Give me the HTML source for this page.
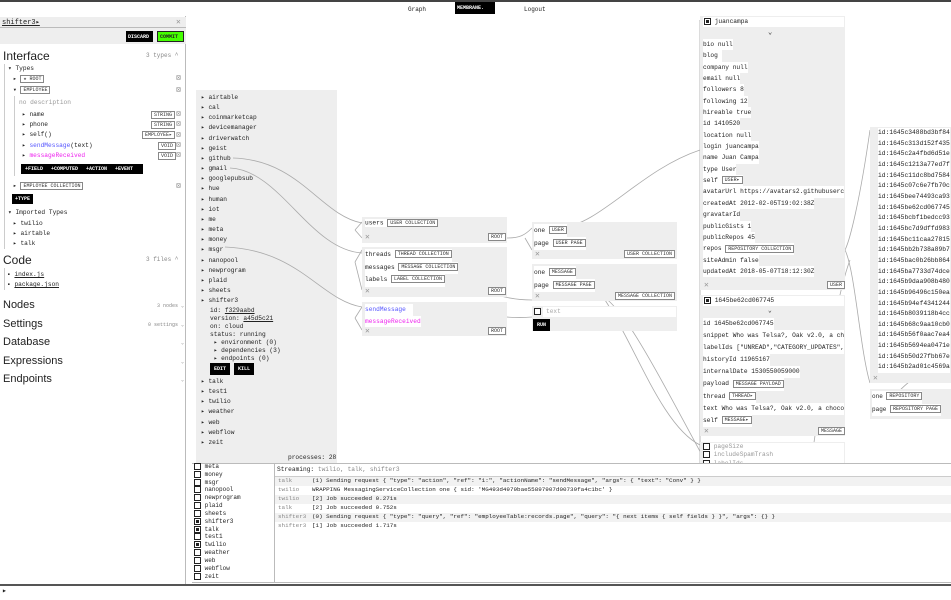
<!DOCTYPE html>
<html><head><meta charset="utf-8"><style>
*{margin:0;padding:0;box-sizing:border-box}
body{width:951px;height:600px;overflow:hidden;background:#fff;font-family:"Liberation Mono",monospace;font-size:6.2px;color:#222;position:relative}
.a{position:absolute}
.g{position:absolute;background:#eee}
.w{background:#fff;display:inline-block}
.t{display:inline-block;border:1px solid #888;font-size:5px;line-height:6px;padding:0 2px;background:#fff;color:#333;vertical-align:middle}
.s{font-family:"Liberation Sans",sans-serif}
.x{color:#999;font-size:8px}
.bk{background:#000;color:#fff;font-weight:bold;font-size:5px;padding:2px 3px;display:inline-block}
.cb{display:inline-block;width:7px;height:7px;border:1px solid #222;vertical-align:middle;background:#fff}
.cb.on{background:#222;box-shadow:inset 0 0 0 1px #fff}
</style></head><body>
<div class="a" style="left:0;top:0;width:951px;height:2px;background:#444"></div>
<div class="a" style="left:408px;top:6px;font-size:6px">Graph</div>
<div class="a" style="left:455px;top:2px;width:40px;height:12px;background:#000;color:#fff;font-size:5px;font-weight:bold;padding:3px 2px">MEMBRANE.</div>
<div class="a" style="left:524px;top:6px;font-size:6px">Logout</div>

<!-- left sidebar -->
<div class="a" style="left:0;top:16px;width:186px;height:568px;border-right:1px solid #bbb"></div>
<div class="a" style="left:0;top:17px;width:186px;height:11px;background:#eee;border-bottom:1px solid #bbb"></div>
<div class="a" style="left:2px;top:18px;text-decoration:underline;font-size:7px">shifter3▸</div>
<div class="a x" style="left:176px;top:17px">✕</div>
<div class="a" style="left:0;top:28px;width:186px;height:16px;background:#eee"></div>
<div class="a" style="left:126px;top:31px;width:27px;height:11px;background:#000;color:#fff;font-size:5px;font-weight:bold;padding:3px 2px">DISCARD</div>
<div class="a" style="left:157px;top:31px;width:27px;height:11px;background:#4f0;border:1px solid #222;font-size:5px;font-weight:bold;padding:2px 2px">COMMIT</div>
<div class="a s" style="left:3px;top:49px;font-size:12px">Interface</div>
<div class="a" style="left:146px;top:52px;color:#888;font-size:6px">3 types ^</div>
<div class="a" style="left:4px;top:64px;width:1px;height:185px;background:#ccc"></div>
<div class="a" style="left:8px;top:65px">▾ Types</div>
<div class="a" style="left:13px;top:75px">▸ <span class="t">★ ROOT</span></div>
<div class="a" style="left:13px;top:86px">▾ <span class="t">EMPLOYEE</span></div>
<div class="a x" style="left:176px;top:73px">⊠</div><div class="a x" style="left:176px;top:85px">⊠</div>
<div class="a" style="left:14px;top:96px;width:1px;height:80px;background:#ccc"></div>
<div class="a" style="left:19px;top:99px;color:#999">no description</div>
<div class="a" style="left:22px;top:111px">▸ name</div><div class="a" style="left:151px;top:111px"><span class="t">STRING</span></div>
<div class="a" style="left:22px;top:121px">▸ phone</div><div class="a" style="left:151px;top:121px"><span class="t">STRING</span></div>
<div class="a" style="left:22px;top:131px">▸ self()</div><div class="a" style="left:142px;top:131px"><span class="t">EMPLOYEE▸</span></div>
<div class="a" style="left:22px;top:142px">▸ <span style="color:#55f">sendMessage</span>(text)</div><div class="a" style="left:158px;top:142px"><span class="t">VOID</span></div>
<div class="a" style="left:22px;top:152px">▸ <span style="color:#e2e">messageReceived</span></div><div class="a" style="left:158px;top:152px"><span class="t">VOID</span></div>
<div class="a" style="left:176px;top:110px;line-height:10.3px;color:#999;font-size:8px">⊠<br>⊠<br>⊠<br>⊠<br>⊠</div>
<div class="a" style="left:21px;top:164px;width:122px;height:10px;background:#000;color:#fff;font-size:5px;font-weight:bold;padding:2px 4px;white-space:nowrap;word-spacing:1px">+FIELD &nbsp;+COMPUTED &nbsp;+ACTION &nbsp;+EVENT</div>
<div class="a" style="left:13px;top:182px">▸ <span class="t">EMPLOYEE COLLECTION</span></div><div class="a x" style="left:176px;top:181px">⊠</div>
<div class="a bk" style="left:12px;top:194px">+TYPE</div>
<div class="a" style="left:8px;top:209px">▾ Imported Types</div>
<div class="a" style="left:13px;top:219px;line-height:10px">▸ twilio<br>▸ airtable<br>▸ talk</div>
<div class="a s" style="left:3px;top:253px;font-size:12px">Code</div>
<div class="a" style="left:146px;top:256px;color:#888;font-size:6px">3 files ^</div>
<div class="a" style="left:4px;top:268px;width:1px;height:22px;background:#ccc"></div>
<div class="a" style="left:7px;top:270px;line-height:10px">▪ <u>index.js</u><br>▪ <u>package.json</u></div>
<div class="a s" style="left:3px;top:296px;font-size:11px;line-height:18.6px">Nodes<br>Settings<br>Database<br>Expressions<br>Endpoints</div>
<div class="a" style="left:140px;top:297px;color:#888;font-size:5px;line-height:18.6px;text-align:right;width:44px">3 nodes ⌄<br>0 settings ⌄<br>⌄<br>⌄<br>⌄</div>

<!-- process list -->
<div class="g" style="left:196px;top:90px;width:141px;height:373px"></div>
<div class="a" style="left:201px;top:93px;line-height:10.15px">▸ airtable<br>▸ cal<br>▸ coinmarketcap<br>▸ devicemanager<br>▸ driverwatch<br>▸ geist<br>▸ github<br>▸ gmail<br>▸ googlepubsub<br>▸ hue<br>▸ human<br>▸ iot<br>▸ me<br>▸ meta<br>▸ money<br>▸ msgr<br>▸ nanopool<br>▸ newprogram<br>▸ plaid<br>▸ sheets<br>▸ shifter3</div>
<div class="a" style="left:210px;top:307px;line-height:8px">id: <u>f329aabd</u><br>version: <u>a45d5c21</u><br>on: cloud<br>status: running<br>&nbsp;▸ environment (0)<br>&nbsp;▸ dependencies (3)<br>&nbsp;▸ endpoints (0)</div>
<div class="a bk" style="left:210px;top:363px;padding:3px 4px">EDIT</div><div class="a bk" style="left:234px;top:363px;padding:3px 4px">KILL</div>
<div class="a" style="left:201px;top:377px;line-height:10.15px">▸ talk<br>▸ test1<br>▸ twilio<br>▸ weather<br>▸ web<br>▸ webflow<br>▸ zeit</div>
<div class="a" style="left:288px;top:454px">processes: 28</div>

<!-- curves -->
<svg class="a" style="left:0;top:0" width="951" height="600" fill="none" stroke="#aaa" stroke-width="0.8">
<path d="M233 158 C300 160 320 215 362 223"/>
<path d="M230 168 C280 170 310 250 362 253"/>
<path d="M225 247 C300 250 320 300 362 307"/>
<path d="M355 230 L362 222 M355 230 L362 238"/>
<path d="M355 262 L362 250 M355 262 L362 290"/>
<path d="M355 318 L362 307 M355 318 L362 330"/>
<path d="M413 223 C460 225 470 238 488 238"/>
<path d="M410 268 C460 270 480 300 532 300"/>
<path d="M420 307 C470 310 500 320 532 317"/>
<path d="M507 238 C520 238 525 235 532 228 M525 238 L532 250"/>
<path d="M560 228 C600 225 640 170 700 150"/>
<path d="M575 270 C620 290 650 420 700 445"/>
<path d="M590 289 C620 300 640 340 710 470"/>
<path d="M760 180 C730 170 710 100 700 20"/>
<path d="M700 20 L700 580 M700 300 L710 296 M700 445 L705 445"/>
<path d="M845 250 C850 240 860 200 870 130 M845 250 C855 270 860 350 870 383"/>
<path d="M810 470 C820 400 835 300 850 260"/>
<path d="M895 395 C905 385 915 375 925 375"/>
</svg>

<!-- graph col 1 -->
<div class="g" style="left:362px;top:217px;width:145px;height:26px"></div>
<div class="a" style="left:365px;top:219px"><span class="w">users <span class="t">USER COLLECTION</span></span></div>
<div class="a x" style="left:365px;top:232px">✕</div><div class="a" style="left:488px;top:233px"><span class="t">ROOT</span></div>
<div class="g" style="left:362px;top:247px;width:145px;height:50px"></div>
<div class="a" style="left:365px;top:249px;line-height:12.5px"><span class="w">threads <span class="t">THREAD COLLECTION</span></span><br><span class="w">messages <span class="t">MESSAGE COLLECTION</span></span><br><span class="w">labels <span class="t">LABEL COLLECTION</span></span></div>
<div class="a x" style="left:365px;top:286px">✕</div><div class="a" style="left:488px;top:287px"><span class="t">ROOT</span></div>
<div class="g" style="left:362px;top:302px;width:145px;height:34px"></div>
<div class="a" style="left:365px;top:304px;line-height:11.5px"><span class="w" style="color:#55f;padding-right:7px">sendMessage</span><br><span class="w" style="color:#e2e">messageReceived</span></div>
<div class="a x" style="left:365px;top:326px">✕</div><div class="a" style="left:488px;top:327px"><span class="t">ROOT</span></div>

<!-- graph col 2 -->
<div class="g" style="left:532px;top:222px;width:145px;height:37px"></div>
<div class="a" style="left:534px;top:224px;line-height:13px"><span class="w">one <span class="t">USER</span></span><br><span class="w">page <span class="t">USER PAGE</span></span></div>
<div class="a x" style="left:535px;top:249px">✕</div><div class="a" style="left:624px;top:250px"><span class="t">USER COLLECTION</span></div>
<div class="g" style="left:532px;top:264px;width:145px;height:37px"></div>
<div class="a" style="left:534px;top:266px;line-height:13px"><span class="w">one <span class="t">MESSAGE</span></span><br><span class="w">page <span class="t">MESSAGE PAGE</span></span></div>
<div class="a x" style="left:535px;top:291px">✕</div><div class="a" style="left:615px;top:292px"><span class="t">MESSAGE COLLECTION</span></div>
<div class="g" style="left:532px;top:306px;width:145px;height:25px"></div>
<div class="a" style="left:543px;top:307px;width:133px;height:10px;background:#fff;color:#aaa;padding:1px 3px">text</div>
<div class="a cb" style="left:534px;top:308px"></div>
<div class="a bk" style="left:533px;top:319px;padding:3px 4px">RUN</div>

<!-- graph col 3 -->
<div class="g" style="left:700px;top:16px;width:145px;height:274px"></div>
<div class="a" style="left:703px;top:17px;width:141px;height:10px;background:#fff;padding:1px 1px"><span class="cb on"></span> juancampa</div>
<div class="a" style="left:768px;top:28px;font-size:7px">⌄</div>
<div class="a" style="left:703px;top:39px;line-height:11.35px;white-space:nowrap;overflow:hidden;width:141px">
<span class="w">bio null</span><br><span class="w">blog&nbsp;</span><br><span class="w">company null</span><br><span class="w">email null</span><br><span class="w">followers 8</span><br><span class="w">following 12</span><br><span class="w">hireable true</span><br><span class="w">id 1410520</span><br><span class="w">location null</span><br><span class="w">login juancampa</span><br><span class="w">name Juan Campa</span><br><span class="w">type User</span><br><span class="w">self <span class="t">USER▸</span></span><br><span class="w">avatarUrl https://avatars2.githubusercontent</span><br><span class="w">createdAt 2012-02-05T19:02:38Z</span><br><span class="w">gravatarId</span><br><span class="w">publicGists 1</span><br><span class="w">publicRepos 45</span><br><span class="w">repos <span class="t">REPOSITORY COLLECTION</span></span><br><span class="w">siteAdmin false</span><br><span class="w">updatedAt 2018-05-07T18:12:30Z</span></div>
<div class="a x" style="left:704px;top:280px">✕</div><div class="a" style="left:827px;top:281px"><span class="t">USER</span></div>

<div class="g" style="left:700px;top:295px;width:145px;height:141px"></div>
<div class="a" style="left:703px;top:296px;width:141px;height:10px;background:#fff;padding:1px 1px"><span class="cb on"></span> 1645be62cd067745</div>
<div class="a" style="left:768px;top:307px">⌄</div>
<div class="a" style="left:703px;top:318px;line-height:12.1px;white-space:nowrap;overflow:hidden;width:141px">
<span class="w">id 1645be62cd067745</span><br><span class="w">snippet Who was Telsa?, Oak v2.0, a chocolate</span><br><span class="w">labelIds ["UNREAD","CATEGORY_UPDATES","INBOX"]</span><br><span class="w">historyId 11965167</span><br><span class="w">internalDate 1530550059000</span><br><span class="w">payload <span class="t">MESSAGE PAYLOAD</span></span><br><span class="w">thread <span class="t">THREAD▸</span></span><br><span class="w">text Who was Telsa?, Oak v2.0, a chocolate</span><br><span class="w">self <span class="t">MESSAGE▸</span></span></div>
<div class="a x" style="left:704px;top:426px">✕</div><div class="a" style="left:818px;top:427px"><span class="t">MESSAGE</span></div>
<div class="g" style="left:700px;top:442px;width:145px;height:25px"></div>
<div class="a" style="left:703px;top:443px;width:141px;height:22px;background:#fff;color:#999;line-height:8.3px;overflow:hidden"><span class="cb"></span> pageSize<br><span class="cb"></span> includeSpamTrash<br><span class="cb"></span> labelIds</div>

<!-- far right -->
<div class="g" style="left:870px;top:127px;width:81px;height:256px"></div>
<div class="a" style="left:878px;top:128px;width:73px;line-height:10.65px;white-space:nowrap;overflow:hidden;font-size:6.3px">
<span class="w">id:1645c3488bd3bf84</span><br><span class="w">id:1645c313d152f435</span><br><span class="w">id:1645c2a4fbd6d51e</span><br><span class="w">id:1645c1213a77ed7f</span><br><span class="w">id:1645c11dc8bd7584</span><br><span class="w">id:1645c07c6e7fb70c</span><br><span class="w">id:1645bee74493ca93</span><br><span class="w">id:1645be62cd067745</span><br><span class="w">id:1645bcbf1bedcc93</span><br><span class="w">id:1645bc7d9dffd983</span><br><span class="w">id:1645bc11caa27815</span><br><span class="w">id:1645bb2b738a89b7</span><br><span class="w">id:1645bac0b26bb864</span><br><span class="w">id:1645ba7733d74dce</span><br><span class="w">id:1645b9daa908b480</span><br><span class="w">id:1645b96496c150ea</span><br><span class="w">id:1645b94ef4341244</span><br><span class="w">id:1645b8039118b4cc</span><br><span class="w">id:1645b68c9aa10cb0</span><br><span class="w">id:1645b56f0aac7ea4</span><br><span class="w">id:1645b5694ea0471e</span><br><span class="w">id:1645b50d27fbb67e</span><br><span class="w">id:1645b2ad01c4569a</span></div>
<div class="a x" style="left:873px;top:373px">✕</div>
<div class="g" style="left:870px;top:389px;width:81px;height:30px"></div>
<div class="a" style="left:872px;top:391px;line-height:12.5px;font-size:6px"><span class="w">one <span class="t">REPOSITORY</span></span><br><span class="w">page <span class="t">REPOSITORY PAGE</span></span></div>

<!-- bottom panel -->
<div class="a" style="left:192px;top:463px;width:759px;height:120px;border-top:1px solid #bbb;border-bottom:1px solid #bbb;background:#fff"></div>
<div class="a" style="left:274px;top:464px;width:1px;height:118px;background:#bbb"></div>
<div class="a" style="left:194px;top:463px;line-height:7.75px;font-size:6px">
<span class="cb"></span> meta<br><span class="cb"></span> money<br><span class="cb"></span> msgr<br><span class="cb"></span> nanopool<br><span class="cb"></span> newprogram<br><span class="cb"></span> plaid<br><span class="cb"></span> sheets<br><span class="cb on"></span> shifter3<br><span class="cb on"></span> talk<br><span class="cb"></span> test1<br><span class="cb on"></span> twilio<br><span class="cb"></span> weather<br><span class="cb"></span> web<br><span class="cb"></span> webflow<br><span class="cb"></span> zeit</div>
<div class="a" style="left:277px;top:466px">Streaming: <span style="color:#888">twilio, talk, shifter3</span></div>
<div class="a" style="left:275px;top:476px;width:676px;height:1px;background:#ccc"></div>
<div class="a" style="left:275px;top:477px;width:676px;white-space:nowrap;overflow:hidden;line-height:8.9px;font-size:5.9px">
<div style="background:#f2f2f2"><span style="color:#888;display:inline-block;width:37px;padding-left:3px">talk</span>(1) Sending request { "type": "action", "ref": "1:", "actionName": "sendMessage", "args": { "text": "Conv" } }</div>
<div><span style="color:#888;display:inline-block;width:37px;padding-left:3px">twilio</span>WRAPPING MessagingServiceCollection one { sid: 'MG493d4979bae55897907d00739fa4c1bc' }</div>
<div style="background:#f2f2f2"><span style="color:#888;display:inline-block;width:37px;padding-left:3px">twilio</span>[2] Job succeeded 0.271s</div>
<div><span style="color:#888;display:inline-block;width:37px;padding-left:3px">talk</span>[2] Job succeeded 0.752s</div>
<div style="background:#f2f2f2"><span style="color:#888;display:inline-block;width:37px;padding-left:3px">shifter3</span>(0) Sending request { "type": "query", "ref": "employeeTable:records.page", "query": "{ next items { self fields } }", "args": {} }</div>
<div><span style="color:#888;display:inline-block;width:37px;padding-left:3px">shifter3</span>[1] Job succeeded 1.717s</div></div>
<div class="a" style="left:0;top:584px;width:951px;height:2px;background:#555"></div>
<div class="a" style="left:2px;top:586px;font-size:8px">▸</div>
</body></html>
